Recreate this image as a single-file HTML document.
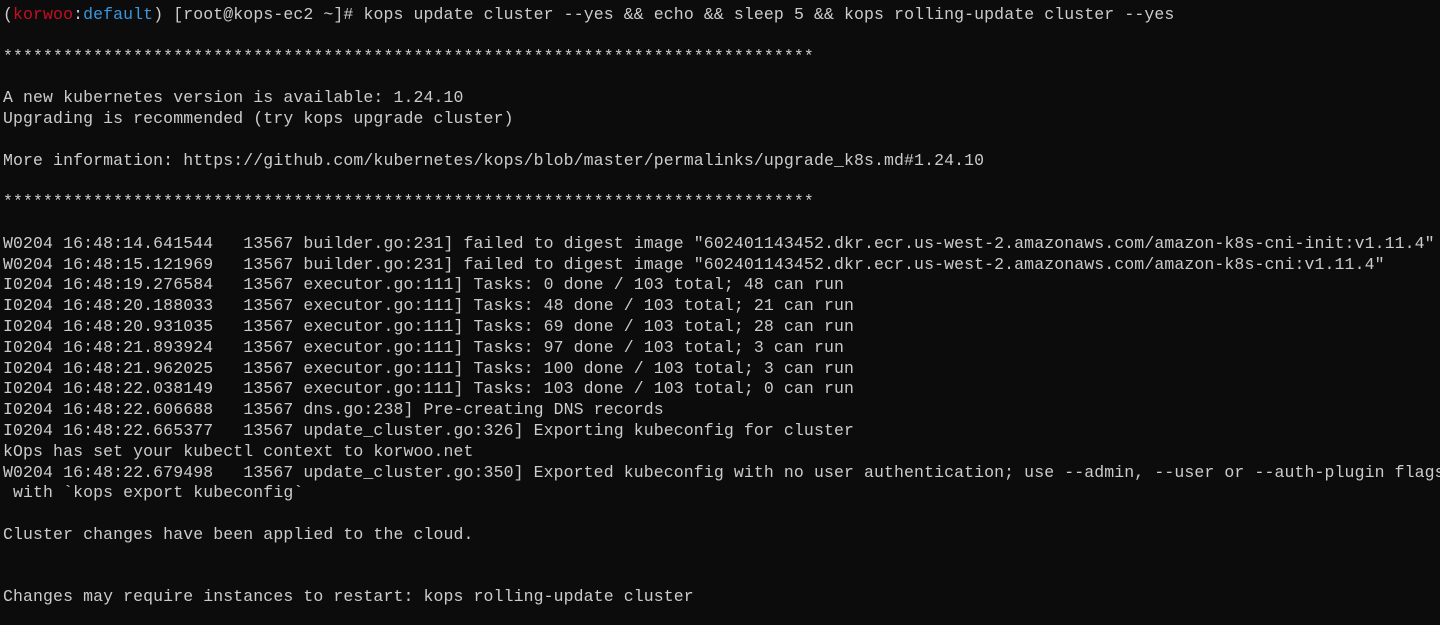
<!DOCTYPE html>
<html><head><meta charset="utf-8"><style>
html,body{margin:0;padding:0;background:#0c0c0c;width:1440px;height:625px;overflow:hidden}
pre{margin:0;padding:5px 0 0 3px;font-family:"Liberation Mono",monospace;font-size:16.5px;letter-spacing:0.11px;line-height:20.8px;color:#cccccc;white-space:pre}
.r{color:#c50f1f}.b{color:#3a96dd}
</style></head><body><pre>(<span class="r">korwoo</span>:<span class="b">default</span>) [root@kops-ec2 ~]# kops update cluster --yes &amp;&amp; echo &amp;&amp; sleep 5 &amp;&amp; kops rolling-update cluster --yes

*********************************************************************************

A new kubernetes version is available: 1.24.10
Upgrading is recommended (try kops upgrade cluster)

More information: https://github.com/kubernetes/kops/blob/master/permalinks/upgrade_k8s.md#1.24.10

*********************************************************************************

W0204 16:48:14.641544   13567 builder.go:231] failed to digest image "602401143452.dkr.ecr.us-west-2.amazonaws.com/amazon-k8s-cni-init:v1.11.4"
W0204 16:48:15.121969   13567 builder.go:231] failed to digest image "602401143452.dkr.ecr.us-west-2.amazonaws.com/amazon-k8s-cni:v1.11.4"
I0204 16:48:19.276584   13567 executor.go:111] Tasks: 0 done / 103 total; 48 can run
I0204 16:48:20.188033   13567 executor.go:111] Tasks: 48 done / 103 total; 21 can run
I0204 16:48:20.931035   13567 executor.go:111] Tasks: 69 done / 103 total; 28 can run
I0204 16:48:21.893924   13567 executor.go:111] Tasks: 97 done / 103 total; 3 can run
I0204 16:48:21.962025   13567 executor.go:111] Tasks: 100 done / 103 total; 3 can run
I0204 16:48:22.038149   13567 executor.go:111] Tasks: 103 done / 103 total; 0 can run
I0204 16:48:22.606688   13567 dns.go:238] Pre-creating DNS records
I0204 16:48:22.665377   13567 update_cluster.go:326] Exporting kubeconfig for cluster
kOps has set your kubectl context to korwoo.net
W0204 16:48:22.679498   13567 update_cluster.go:350] Exported kubeconfig with no user authentication; use --admin, --user or --auth-plugin flags
 with `kops export kubeconfig`

Cluster changes have been applied to the cloud.


Changes may require instances to restart: kops rolling-update cluster
</pre></body></html>
